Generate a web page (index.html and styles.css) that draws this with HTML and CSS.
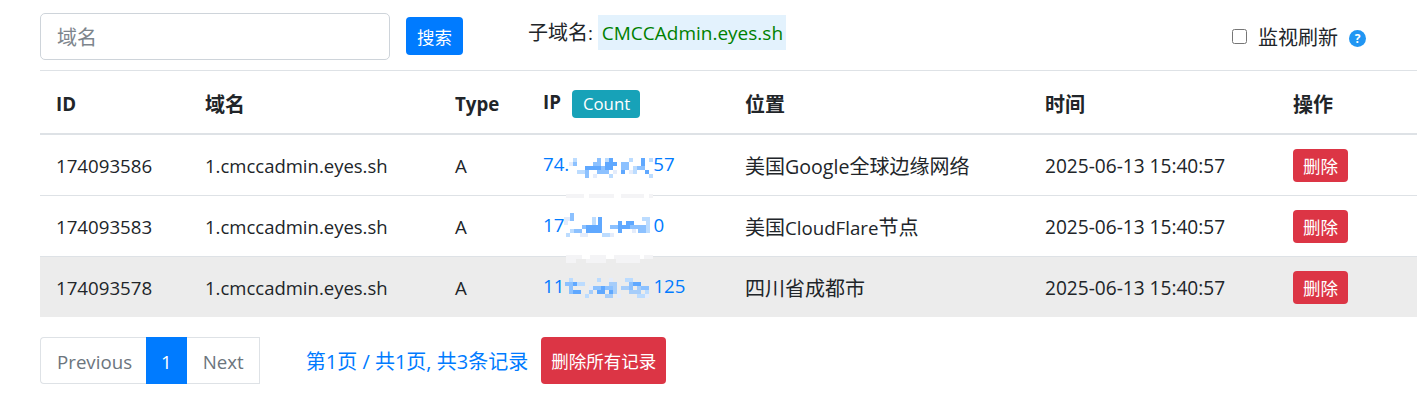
FILE: index.html
```html
<!DOCTYPE html>
<html lang="zh-CN">
  <head>
    <meta charset="UTF-8" />
    <title>子域名</title>
    <link rel="stylesheet" href="styles.css">
  </head>
  <body>
    <div id="container">
      <form class="toolbar">
        <input class="search" type="text" placeholder="域名" />
        <button class="btn btn-blue" type="button">搜索</button>
        <div class="subdomain"><span class="zh">子域名</span>: <span class="mark">CMCCAdmin.eyes.sh</span></div>
        <label class="watch">
          <input type="checkbox" />
          <span class="zh">监视刷新</span>
          <svg class="help" width="17" height="17" viewBox="0 0 17 17">
            <circle cx="8.5" cy="8.5" r="8.5" fill="#2196f3" />
            <text x="8.5" y="12.8" text-anchor="middle" class="help-mark">?</text>
          </svg>
        </label>
      </form>
      <table>
        <thead>
          <tr>
            <th class="c-id">ID</th>
            <th class="c-domain zh">域名</th>
            <th class="c-type">Type</th>
            <th class="c-ip"><span class="ip-title">IP</span><span class="badge">Count</span></th>
            <th class="c-loc zh">位置</th>
            <th class="c-time zh">时间</th>
            <th class="zh">操作</th>
          </tr>
        </thead>
        <tbody>
          <tr>
            <td>174093586</td>
            <td class="host">1.cmccadmin.eyes.sh</td>
            <td>A</td>
            <td><a href="#">74.<svg class="blur" width="84" height="30" viewBox="0 0 84 30">
              <path fill="#f4f4f6" d="M-3 43h18v4H-3zM20 43h25v4H20zM52 43h23v4H52zM80 43h4v4h-4z" />
              <path fill="#fff" d="M15 43h5v4h-5zM45 43h7v4h-7zM75 43h5v4h-5z" />
              <path fill="#e4ecfb" d="M0 11h4v4H0zM24 23h4v4h-4zM60 19h4v4h-4zM44 19h4v4h-4z" />
              <path fill="#bcdcff" d="M4 7h4v4H4zM8 19h8v4H8zM36 7h4v4h-4zM40 23h4v4h-4zM60 7h4v4h-4zM64 15h4v8h-4zM80 7h4v4h-4zM80 23h4v4h-4z" />
              <path fill="#8cc1ff" d="M4 11h4v4H4zM28 7h4v4h-4zM24 11h8v4h-8zM52 11h8v8h-8zM16 19h4v8h-4zM28 19h12v4H28zM32 15h4v4h-4zM68 15h8v4h-8z" />
              <path fill="#5fa8ff" d="M40 7h4v12h-4zM36 11h4v8h-4zM44 11h4v4h-4zM16 15h16v4H16zM72 7h4v8h-4zM52 19h4v4h-4zM76 19h4v4h-4z" />
            </svg>57</a></td>
            <td class="zh">美国<span class="en">Google</span>全球边缘网络</td>
            <td class="time">2025-06-13 15:40:57</td>
            <td><button class="btn btn-red btn-sm" type="button">删除</button></td>
          </tr>
          <tr>
            <td>174093583</td>
            <td class="host">1.cmccadmin.eyes.sh</td>
            <td>A</td>
            <td><a href="#">17<svg class="blur" width="89" height="30" viewBox="0 0 89 30">
              <path fill="#f4f4f6" d="M2 43h16v4H2zM26 43h16v4H26zM50 43h26v4H50zM80 43h9v4h-9z" />
              <path fill="#fff" d="M18 43h8v4h-8zM42 43h8v4h-8zM76 43h4v4h-4z" />
              <path fill="#f4f4f6" d="M2 47h10v4H2zM22 47h20v4H22zM52 47h24v4H52z" />
              <path fill="#e4ecfb" d="M0 5h8v4H0zM0 9h4v4H0zM16 21h8v4h-8zM46 21h4v4h-4zM68 17h4v4h-4z" />
              <path fill="#bcdcff" d="M2 21h4v4H2zM28 5h4v4h-4zM28 9h4v4h-4zM6 17h4v4H6zM38 21h8v4h-8zM78 5h8v4h-8zM82 9h4v12h-4z" />
              <path fill="#8cc1ff" d="M6 1h4v8H6zM18 13h8v4h-8zM10 17h8v4h-8zM46 13h8v4h-8zM74 13h8v8h-8zM66 13h8v4h-8z" />
              <path fill="#5fa8ff" d="M22 13h16v8H22zM34 5h4v8h-4zM54 9h4v12h-4zM58 13h8v4h-8zM62 9h8v4h-8z" />
            </svg>0</a></td>
            <td class="zh">美国<span class="en-cf">CloudFlare</span>节点</td>
            <td class="time">2025-06-13 15:40:57</td>
            <td><button class="btn btn-red btn-sm" type="button">删除</button></td>
          </tr>
          <tr class="hover">
            <td>174093578</td>
            <td class="host">1.cmccadmin.eyes.sh</td>
            <td>A</td>
            <td><a href="#">11<svg class="blur" width="89" height="30" viewBox="0 0 89 30">
              <path fill="#e4ecfb" d="M45 5h4v4h-4zM25 13h4v4h-4zM53 21h4v4h-4zM81 21h4v4h-4z" />
              <path fill="#bcdcff" d="M5 5h4v4H5zM33 5h4v4h-4zM13 9h8v4h-8zM21 21h4v4h-4zM73 21h8v4h-8zM81 17h4v4h-4zM61 5h8v4h-8z" />
              <path fill="#a6cdfa" d="M45 9h8v4h-8zM49 13h4v8h-4zM41 21h8v4h-8zM73 13h4v8h-4zM25 17h4v4h-4zM57 13h8v4h-8zM65 17h8v4h-8z" />
              <path fill="#8cc1ff" d="M1 9h8v4H1zM5 13h4v8H5zM29 13h12v4H29zM41 13h8v4h-8zM77 13h8v4h-8zM65 9h4v8h-4z" />
              <path fill="#5fa8ff" d="M9 9h4v4H9zM9 17h8v4H9zM33 17h4v4h-4zM45 17h4v4h-4zM69 9h8v4h-8zM37 13h4v8h-4z" />
            </svg>125</a></td>
            <td class="zh">四川省成都市</td>
            <td class="time">2025-06-13 15:40:57</td>
            <td><button class="btn btn-red btn-sm" type="button">删除</button></td>
          </tr>
        </tbody>
      </table>
      <div class="footer">
        <ul class="pagination">
          <li class="muted">Previous</li>
          <li class="on">1</li>
          <li class="muted">Next</li>
        </ul>
        <a class="summary zh" href="#">第1页 / 共1页, 共3条记录</a>
        <button class="btn btn-red btn-all" type="button">删除所有记录</button>
      </div>
    </div>
  </body>
</html>
```

FILE: styles.css
```css
body {
  margin: 0;
  overflow: hidden;
  background: #fff;
  color: #212529;
  font-family: "Open Sans", "Noto Sans CJK SC", sans-serif;
  font-size: 18.7px;
}
.zh {
  font-size: 20px;
}
.en {
  font-size: 19.6px;
}
.en-cf {
  font-size: 18.7px;
}
.time {
  font-size: 19.1px;
}
.host {
  font-size: 18.5px;
}
#container {
  width: 1417px;
  padding-left: 40px;
  box-sizing: border-box;
}
.toolbar {
  display: flex;
  align-items: center;
  height: 70px;
  border-bottom: 1px solid #dee2e6;
}
.search {
  width: 350px;
  height: 47px;
  margin-top: 3px;
  padding: 2px 16px 0;
  box-sizing: border-box;
  border: 1px solid #ced4da;
  border-radius: 5px;
  font: inherit;
  font-size: 20px;
  color: #495057;
}
.search::placeholder {
  color: #7d858c;
}
.btn {
  border: 0;
  border-radius: 4px;
  color: #fff;
  font-family: inherit;
  font-size: 17.5px;
  padding: 0;
}
.btn-blue {
  width: 57px;
  height: 38px;
  margin-left: 16px;
  margin-top: 2px;
  background: #007bff;
}
.btn-red {
  background: #dc3545;
}
.btn-sm {
  display: block;
  width: 55px;
  height: 33px;
}
.subdomain {
  margin-left: 65px;
  margin-top: -5px;
  white-space: nowrap;
}
.mark {
  display: inline-block;
  height: 35px;
  line-height: 37px;
  padding: 0 3px 0 4px;
  font-size: 19px;
  color: #008000;
  background: #e3f2fd;
}
.watch {
  display: flex;
  align-items: center;
  margin-left: auto;
  margin-right: 51px;
  margin-top: 3px;
}
.watch input {
  width: 15px;
  height: 15px;
  margin: 0 11px 0 0;
}
.help {
  margin-left: 11px;
  margin-top: 3px;
}
.help-mark {
  font-size: 12px;
  font-weight: 700;
  fill: #fff;
}
table {
  width: 1377px;
  border-collapse: collapse;
  table-layout: fixed;
}
th {
  height: 63px;
  padding: 2px 16px 0;
  box-sizing: border-box;
  text-align: left;
  font-weight: 700;
  border-bottom: 2px solid #dee2e6;
  white-space: nowrap;
}
td {
  height: 61px;
  padding: 2px 16px 0;
  box-sizing: border-box;
  border-bottom: 1px solid #dee2e6;
  white-space: nowrap;
}
tbody tr:last-child td {
  border-bottom: 0;
}
.c-id { width: 149px; }
.c-domain { width: 250px; }
.c-type { width: 88px; }
.c-ip { width: 202px; }
.c-loc { width: 300px; }
.c-time { width: 248px; }
.hover {
  background: #ececec;
}
a {
  color: #007bff;
  text-decoration: none;
}
.badge {
  display: inline-block;
  height: 28px;
  line-height: 28px;
  margin-left: 11px;
  padding: 0 10px 0 11px;
  border-radius: 4px;
  color: #fff;
  background: #17a2b8;
  font-size: 16.8px;
  font-weight: 400;
  vertical-align: middle;
}
.blur {
  overflow: visible;
  vertical-align: middle;
  shape-rendering: crispEdges;
}
.footer {
  display: flex;
  align-items: center;
  margin-top: 20px;
}
.pagination {
  display: flex;
  margin: 0;
  padding: 0;
  list-style: none;
}
.pagination li {
  height: 47px;
  line-height: 47px;
  box-sizing: border-box;
  border: 1px solid #dee2e6;
  padding: 0 15px 0 16px;
  color: #6c757d;
}
.pagination li:first-child {
  padding-right: 14px;
  border-right: 0;
  border-radius: 4px 0 0 4px;
}
.pagination li:last-child {
  border-left: 0;
}
.pagination .on {
  color: #fff;
  background: #007bff;
  border-color: #007bff;
  padding: 0 14px;
}
.summary {
  margin-left: 46px;
}
.btn-all {
  width: 125px;
  height: 47px;
  margin-left: 13px;
}
```
